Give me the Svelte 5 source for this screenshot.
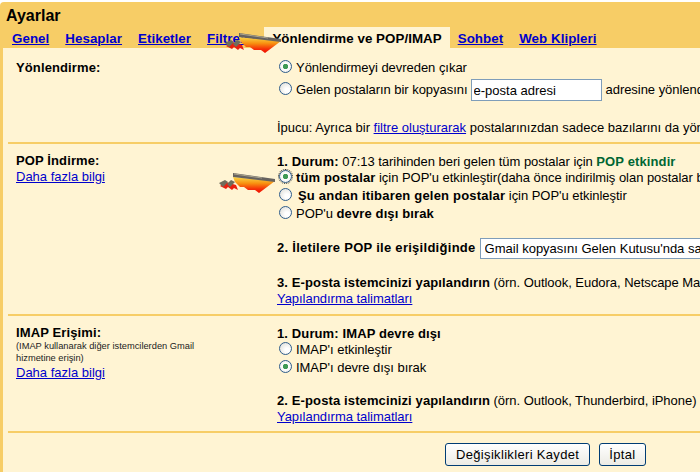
<script>
	const tabs = ['Genel', 'Hesaplar', 'Etiketler', 'Filtreler', 'Yönlendirme ve POP/IMAP', 'Sohbet', 'Web Klipleri'];
	const active = 'Yönlendirme ve POP/IMAP';
	let email = 'e-posta adresi';
</script>

{#snippet arrow(cls)}
	<svg class="arrow {cls}" width="60" height="30" viewBox="0 0 60 30">
		<defs>
			<linearGradient id="fire-{cls}" x1="0" y1="0" x2="0" y2="1">
				<stop offset="0" stop-color="#f8d848" />
				<stop offset="0.4" stop-color="#f89010" />
				<stop offset="0.75" stop-color="#f63008" />
				<stop offset="1" stop-color="#ee0c00" />
			</linearGradient>
		</defs>
		<path d="M15 12 L57 16 L41 28 L37 25 L30 25 L26 22 L22 22 L17 17 Z" fill="url(#fire-{cls})" />
		<path d="M2 21 L8 24 L10 22 L14 25 L16 23 L20 25 L18 20 L8 17 Z" fill="#e8200f" />
		<path d="M1 18 L7 15 L10 17 L5 22 Z M9 19 L13 15 L17 17 L12 22 Z" fill="#6f6d5c" />
		<path d="M15 8 L57 14 L57 17 L15 12 Z" fill="#66625f" />
		<path d="M16 9 L44 13" stroke="#aaa48e" stroke-width="1" fill="none" />
	</svg>
{/snippet}

<div class="settings">
	<header>
		<h1>Ayarlar</h1>
		<nav>
			{#each tabs as tab}
				{#if tab === active}
					<span class="tab current">{tab}</span>
				{:else}
					<a class="tab" href="#top">{tab}</a>
				{/if}
			{/each}
		</nav>
		{@render arrow('top-arrow')}
	</header>

	<div class="body">
		<section class="forward">
			<div class="label"><b class="head">Yönlendirme:</b></div>
			<div class="opts">
				<label><input type="radio" name="fwd" checked /> Yönlendirmeyi devreden çıkar</label>
				<label class="with-input">
					<input type="radio" name="fwd" /> Gelen postaların bir kopyasını
					<input class="text" type="text" bind:value={email} /> adresine yönlendir
				</label>
				<p class="hint">İpucu: Ayrıca bir <a href="#top">filtre oluşturarak</a> postalarınızdan sadece bazılarını da yönlendirebilirsiniz</p>
			</div>
		</section>

		<section class="pop">
			<div class="label">
				<b class="head">POP İndirme:</b>
				<a href="#top">Daha fazla bilgi</a>
			</div>
			<div class="opts">
				<div class="status"><b>1. Durum:</b> 07:13 tarihinden beri gelen tüm postalar için <b class="green">POP etkindir</b></div>
				<label><input class="focused" type="radio" name="pop" checked /> <span><b>tüm postalar</b> için POP'u etkinleştir(daha önce indirilmiş olan postalar bile)</span></label>
				<label><input type="radio" name="pop" /> <span class="nudge"><b>Şu andan itibaren gelen postalar</b> için POP'u etkinleştir</span></label>
				<label><input type="radio" name="pop" /> <span>POP'u <b>devre dışı bırak</b></span></label>
				<div class="step two">
					<b>2. İletilere POP ile erişildiğinde</b>
					<select><option>Gmail kopyasını Gelen Kutusu'nda sakla</option></select>
				</div>
				<div class="step three"><b>3. E-posta istemcinizi yapılandırın</b> (örn. Outlook, Eudora, Netscape Mail)</div>
				<a class="setup" href="#top">Yapılandırma talimatları</a>
			</div>
			{@render arrow('pop-arrow')}
		</section>

		<section class="imap">
			<div class="label">
				<b class="head">IMAP Erişimi:</b>
				<small>(IMAP kullanarak diğer istemcilerden Gmail hizmetine erişin)</small>
				<a href="#top">Daha fazla bilgi</a>
			</div>
			<div class="opts">
				<div class="status"><b>1. Durum: IMAP devre dışı</b></div>
				<label><input type="radio" name="imap" /> <span>IMAP'ı etkinleştir</span></label>
				<label><input type="radio" name="imap" checked /> <span>IMAP'ı devre dışı bırak</span></label>
				<div class="step three"><b>2. E-posta istemcinizi yapılandırın</b> (örn. Outlook, Thunderbird, iPhone)</div>
				<a class="setup" href="#top">Yapılandırma talimatları</a>
			</div>
		</section>

		<div class="actions">
			<button>Değişiklikleri Kaydet</button>
			<button class="cancel">İptal</button>
		</div>
	</div>
</div>

<style>
	:global(body) {
		background: #fff;
	}

	.settings {
		position: relative;
		width: 700px;
		height: 472px;
		padding-top: 2px;
		box-sizing: border-box;
		overflow: hidden;
		font-family: "Liberation Sans", Arial, sans-serif;
		font-size: 13px;
		color: #000;
	}

	header {
		background: #f7cd66;
		border-radius: 4px 0 0 0;
		height: 46px;
		box-sizing: border-box;
		padding: 3px 0 0 6px;
	}

	h1 {
		margin: 0;
		font-size: 16px;
		line-height: 22px;
		font-weight: bold;
	}

	nav {
		display: flex;
		margin-left: -2px;
		height: 23px;
		white-space: nowrap;
	}

	.tab {
		font-size: 13.33px;
		letter-spacing: 0.05px;
		font-weight: bold;
		line-height: 23px;
		padding: 0 8px;
	}

	.tab.current {
		background: #fff4d3;
		color: #000;
	}

	a {
		color: #0000cc;
		text-decoration: underline;
	}

	.body {
		background: #fff4d3;
		border-left: 3px solid #f7cd66;
		height: 424px;
		white-space: nowrap;
		overflow: hidden;
	}

	section {
		display: grid;
		grid-template-columns: 269px 1fr;
		margin-left: 5px;
		border-bottom: 2px solid #f7cd66;
		box-sizing: border-box;
		position: relative;
	}

	.forward { height: 96px; padding-top: 11px; }
	.pop { height: 172px; padding-top: 9px; }
	.imap { height: 117px; padding-top: 9px; }

	.forward .label {
		padding-top: 1px;
	}

	.label {
		display: flex;
		flex-direction: column;
		align-items: flex-start;
		padding-left: 8px;
		line-height: 15px;
	}

	.label a {
		margin-top: 1px;
	}

	.head {
		font-size: 13px;
	}

	b {
		letter-spacing: 0.12px;
	}

	small {
		font-size: 9.3px;
		line-height: 12px;
		width: 190px;
		white-space: normal;
		color: #222;
	}

	.opts {
		display: flex;
		flex-direction: column;
		align-items: flex-start;
		line-height: 18px;
		min-width: 0;
		letter-spacing: -0.04px;
	}

	.status {
		margin-bottom: -2px;
	}

	.opts label {
		display: flex;
		align-items: center;
		gap: 4px;
		height: 18px;
	}

	.opts input[type="radio"] {
		appearance: none;
		flex: none;
		width: 13px;
		height: 13px;
		margin: 0 0 3px 2px;
		border: 1px solid #2f5d8c;
		border-radius: 50%;
		background: radial-gradient(circle at 65% 65%, #fff 20%, #dcdcd6 95%);
		box-sizing: border-box;
	}

	.opts input[type="radio"]:checked {
		background: radial-gradient(circle, #3f9a55 0 2.4px, #fff 3px, #e4e4de 100%);
	}

	.opts input.focused {
		outline: 1px dotted #333;
		outline-offset: 0;
	}

	.nudge {
		padding-left: 2px;
	}

	.nudge b {
		letter-spacing: 0.2px;
	}

	.with-input {
		height: 22px !important;
		margin-top: 2px;
	}

	.text {
		width: 131px;
		height: 22px;
		margin-left: -1px;
		box-sizing: border-box;
		border: 1px solid #7f9db9;
		background: #fff;
		padding: 0 2px;
		font: 13px "Liberation Sans", Arial, sans-serif;
	}

	.hint {
		margin: 18px 0 0;
		letter-spacing: 0;
	}

	.green {
		color: #006633;
	}

	.step.two {
		display: flex;
		align-items: center;
		gap: 4px;
		margin-top: 14px;
		height: 22px;
	}

	.step.two b {
		letter-spacing: 0.28px;
	}

	select {
		width: 260px;
		height: 21px;
		border: 1px solid #7f9db9;
		background: #fff;
		font: 13px "Liberation Sans", Arial, sans-serif;
		padding: 0 4px;
		appearance: none;
	}

	.step.three {
		margin-top: 16px;
		line-height: 16px;
	}

	.setup {
		margin-top: -1px;
	}

	.actions {
		display: flex;
		gap: 9px;
		padding: 10px 0 0 442px;
	}

	button {
		height: 23px;
		padding: 0 10px;
		border: 1px solid #003c74;
		border-radius: 3px;
		background: linear-gradient(#fff, #ecebe4);
		font: 13px "Liberation Sans", Arial, sans-serif;
		letter-spacing: 0.33px;
		color: #000;
	}

	.cancel {
		padding: 0 9px;
	}

	.arrow {
		position: absolute;
	}

	.top-arrow {
		left: 224px;
		top: 25px;
	}

	.pop-arrow {
		left: 210px;
		top: 21px;
	}
</style>
